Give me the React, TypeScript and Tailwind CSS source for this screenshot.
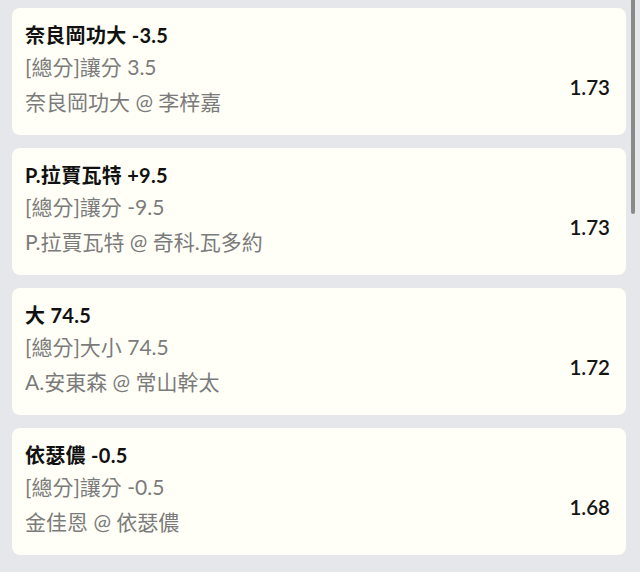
import React from 'react'

const bets = [
  { title: '奈良岡功大 -3.5', market: '[總分]讓分 3.5', match: '奈良岡功大 @ 李梓嘉', odds: '1.73' },
  { title: 'P.拉賈瓦特 +9.5', market: '[總分]讓分 -9.5', match: 'P.拉賈瓦特 @ 奇科.瓦多約', odds: '1.73' },
  { title: '大 74.5', market: '[總分]大小 74.5', match: 'A.安東森 @ 常山幹太', odds: '1.72' },
  { title: '依瑟儂 -0.5', market: '[總分]讓分 -0.5', match: '金佳恩 @ 依瑟儂', odds: '1.68' },
]

const App = () => {
  return (
    <div
      className="relative w-[640px] h-[572px] overflow-hidden bg-[#e6e7ea]"
      style={{ fontFamily: 'Lato, "Noto Sans CJK TC", sans-serif' }}
    >
      <div className="flex flex-col gap-[13px] pt-2 pl-3 pr-[14px]">
        {bets.map((bet) => (
          <div key={bet.title} className="flex h-[127px] justify-between rounded-lg bg-[#fffff7] pl-[13px] pr-4">
            <div className="flex flex-col pt-4">
              <div className="text-[20px] font-bold leading-[22px] tracking-[0.3px] text-[#111]">{bet.title}</div>
              <div className="mt-[7px] text-[21px] leading-[28px] text-[#7b7b7b]">{bet.market}</div>
              <div className="mt-[7px] text-[21px] leading-[28px] text-[#7b7b7b]">{bet.match}</div>
            </div>
            <div className="self-center mt-8 text-[20.5px] font-semibold text-[#151515]">{bet.odds}</div>
          </div>
        ))}
      </div>
      {/* scrollbar */}
      <div className="absolute right-[5px] top-0 h-[214px] w-1 rounded-b-sm bg-[#8a8a8a]" />
    </div>
  )
}

export default App
